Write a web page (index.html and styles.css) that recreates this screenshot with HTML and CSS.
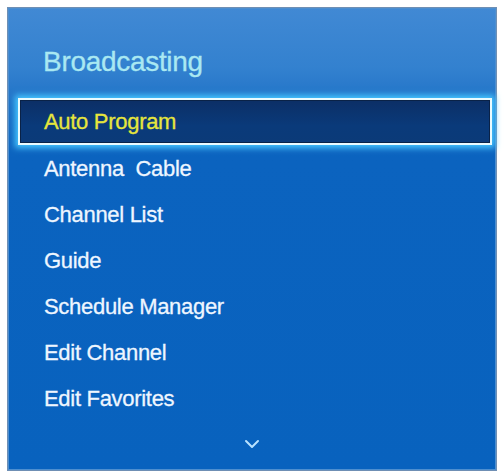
FILE: index.html
```html
<!DOCTYPE html>
<html lang="en">
<head>
    <meta charset="UTF-8">
    <title>Broadcasting</title>
    <link rel="stylesheet" href="styles.css">
</head>
<body>
    <div class="menu">
        <div class="menu-title">Broadcasting</div>
        <ul class="menu-list">
            <li class="menu-item active">Auto Program</li>
            <li class="menu-item">Antenna&nbsp; Cable</li>
            <li class="menu-item">Channel List</li>
            <li class="menu-item">Guide</li>
            <li class="menu-item">Schedule Manager</li>
            <li class="menu-item">Edit Channel</li>
            <li class="menu-item">Edit Favorites</li>
        </ul>
        <div class="more">
            <svg width="16" height="10" viewBox="0 0 16 10">
                <path d="M2 2 L8 8 L14 2" fill="none" stroke="#b8e2ff" stroke-width="2" stroke-linecap="round" stroke-linejoin="round"/>
            </svg>
        </div>
    </div>
</body>
</html>
```

FILE: styles.css
```css
* {
    margin: 0;
    padding: 0;
    box-sizing: border-box;
}

body {
    background-color: #fff;
    font-family: 'Liberation Sans', Arial, sans-serif;
    padding: 7px;
}

.menu {
    width: 490px;
    height: 464px;
    border: 1px solid #6f8fb4;
    background: linear-gradient(to bottom, #4189d4 0px, #3381cf 60px, #1d70c6 100px, #0b63bf 150px, #0862be 100%);
    box-shadow: inset 0 0 0 1px #4d8fd0;
    display: flex;
    flex-direction: column;
}

.menu-title {
    color: #a9e8f2;
    font-size: 28px;
    line-height: 32px;
    padding: 38px 0 0 35px;
    height: 90px;
    letter-spacing: -0.3px;
    -webkit-text-stroke: 0.3px #a9e8f2;
}

.menu-list {
    list-style: none;
}

.menu-item {
    color: #eef6ff;
    font-size: 22px;
    height: 46px;
    line-height: 46px;
    padding-left: 36px;
    letter-spacing: -0.3px;
    -webkit-text-stroke: 0.3px #eef6ff;
}

.menu-item.active {
    color: #e6e63c;
    -webkit-text-stroke: 0.3px #e6e63c;
    margin: 0 4px 1px 10px;
    height: 47px;
    line-height: 43px;
    padding-left: 24px;
    border: 2px solid #e9fbff;
    background: linear-gradient(to bottom, #0c2f66, #0a3a7a 60%, #0b3a78);
    box-shadow: 0 0 6px 3px #46c6ff, inset 0 0 0 1px #0a2247;
}

.more {
    display: flex;
    justify-content: center;
    padding-top: 17px;
}
```
